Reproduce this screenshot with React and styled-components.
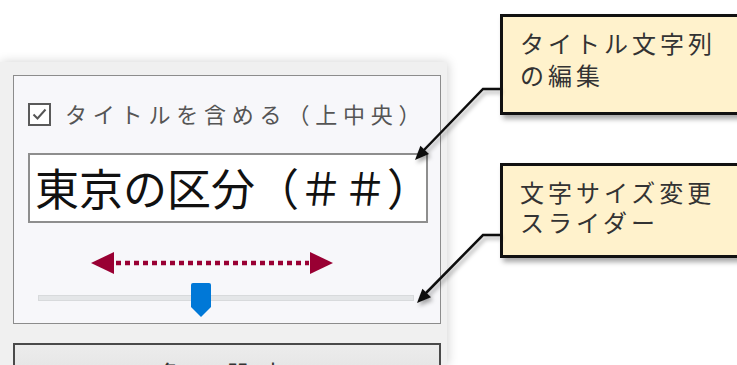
import React from 'react';
import styled, { createGlobalStyle } from 'styled-components';

const GlobalStyle = createGlobalStyle`
  html, body { margin: 0; padding: 0; background: #fff; }
  body { overflow: hidden; }
`;

const Page = styled.div`
  position: relative;
  width: 737px;
  height: 365px;
  overflow: hidden;
  background: #fff;
  font-family: "Noto Sans CJK JP", "Noto Sans", sans-serif;
`;

const Window = styled.div`
  margin-top: 62px;
  width: 447px;
  height: 303px;
  box-sizing: border-box;
  padding: 13px 6px 0 13px;
  background: #f0f0f0;
  box-shadow: 1px 0 10px rgba(0, 0, 0, 0.18);
  display: flex;
  flex-direction: column;
  gap: 19px;
  overflow: hidden;
  & > * { flex-shrink: 0; }
`;

const GroupBox = styled.div`
  height: 249px;
  box-sizing: border-box;
  border: 1px solid #8c8c8c;
  background: #f7f7fa;
  padding: 26px 12px 0 14px;
  display: flex;
  flex-direction: column;
`;

const CheckRow = styled.label`
  display: flex;
  align-items: center;
  gap: 14px;
  height: 25px;
`;

const CheckBox = styled.span`
  width: 23px;
  height: 23px;
  box-sizing: border-box;
  border: 2px solid #5a5a5a;
  background: #fff;
  display: flex;
  align-items: center;
  justify-content: center;
`;

const CheckLabel = styled.span`
  font-size: 22px;
  line-height: 25px;
  letter-spacing: 5.8px;
  color: #555;
  white-space: nowrap;
  margin-top: -2px;
`;

const TitleInput = styled.input`
  margin-top: 26px;
  width: 400px;
  height: 70px;
  box-sizing: border-box;
  border: 2px solid #8e8e8e;
  background: #fff;
  padding: 0 0 2px 5px;
  font-family: inherit;
  font-size: 44px;
  color: #111;
  outline: none;
`;

const Indicator = styled.svg`
  display: block;
  margin: 29px 0 0 63px;
`;

const Slider = styled.div`
  position: relative;
  margin: 9px 0 0 10px;
  width: 376px;
  height: 34px;
`;

const Track = styled.div`
  position: absolute;
  left: 0;
  right: 0;
  top: 12px;
  height: 6px;
  box-sizing: border-box;
  background: #e4e6e8;
  border: 1px solid #d8dadc;
`;

const Thumb = styled.svg`
  position: absolute;
  top: 0;
  display: block;
`;

const Button = styled.div`
  height: 60px;
  box-sizing: border-box;
  border: 2px solid #4a4a4a;
  background: linear-gradient(#ececec, #dedede);
  padding-top: 12px;
  text-align: center;
  font-size: 24px;
  line-height: 32px;
  letter-spacing: 10px;
  color: #333;
`;

const Callout = styled.div`
  position: absolute;
  left: 500px;
  top: ${p => p.$top}px;
  width: 260px;
  height: ${p => p.$height}px;
  box-sizing: border-box;
  border: 3px solid #111;
  background: #fff2cc;
  box-shadow: 3px 4px 5px rgba(0, 0, 0, 0.35);
  padding: ${p => p.$pad}px 0 0 17px;
  font-size: 24px;
  line-height: ${p => p.$line}px;
  letter-spacing: 4px;
  color: #333;
`;

const Overlay = styled.svg`
  position: absolute;
  left: 0;
  top: 0;
  pointer-events: none;
`;

const sliderValue = 43;

export default function App() {
  const thumbLeft = (sliderValue / 100) * (376 - 20);
  return (
    <Page>
      <GlobalStyle />
      <Window>
        <GroupBox>
          <CheckRow>
            <CheckBox>
              <svg width="15" height="13" viewBox="0 0 15 13">
                <path d="M1.5 6.5 L5.5 10.5 L13.5 1.5" fill="none" stroke="#555" strokeWidth="2" />
              </svg>
            </CheckBox>
            <CheckLabel>タイトルを含める（上中央）</CheckLabel>
          </CheckRow>
          <TitleInput readOnly value="東京の区分（＃＃）" />
          <Indicator width="242" height="22" viewBox="0 0 242 22">
            <polygon points="0,11 23,0 23,22" fill="#990033" />
            <polygon points="242,11 219,0 219,22" fill="#990033" />
            <line x1="25" y1="11" x2="218" y2="11" stroke="#990033" strokeWidth="4.5" strokeDasharray="5 4" />
          </Indicator>
          <Slider>
            <Track />
            <Thumb width="20" height="34" viewBox="0 0 20 34" style={{ left: thumbLeft }}>
              <path d="M2 0 H18 Q20 0 20 2 V24 L10 34 L0 24 V2 Q0 0 2 0 Z" fill="#0078d7" />
            </Thumb>
          </Slider>
        </GroupBox>
        <Button>色の設定</Button>
      </Window>

      <Callout $top={14} $height={101} $pad={10} $line={32}>
        タイトル文字列<br />の編集
      </Callout>
      <Callout $top={163} $height={95} $pad={11} $line={30}>
        文字サイズ変更<br />スライダー
      </Callout>

      <Overlay width="737" height="365" viewBox="0 0 737 365">
        <defs>
          <filter id="sh" x="-20%" y="-20%" width="140%" height="140%">
            <feDropShadow dx="2" dy="3" stdDeviation="2" floodColor="#000" floodOpacity="0.35" />
          </filter>
        </defs>
        <g filter="url(#sh)">
          <polyline points="500,89 483,89 424,150" fill="none" stroke="#111" strokeWidth="2.5" />
          <polygon points="415,160 429,154 420.4,145.7" fill="#111" />
          <polyline points="500,235 483,235 426,293" fill="none" stroke="#111" strokeWidth="2.5" />
          <polygon points="417,303 431,297.2 422.4,288.8" fill="#111" />
        </g>
      </Overlay>
    </Page>
  );
}
